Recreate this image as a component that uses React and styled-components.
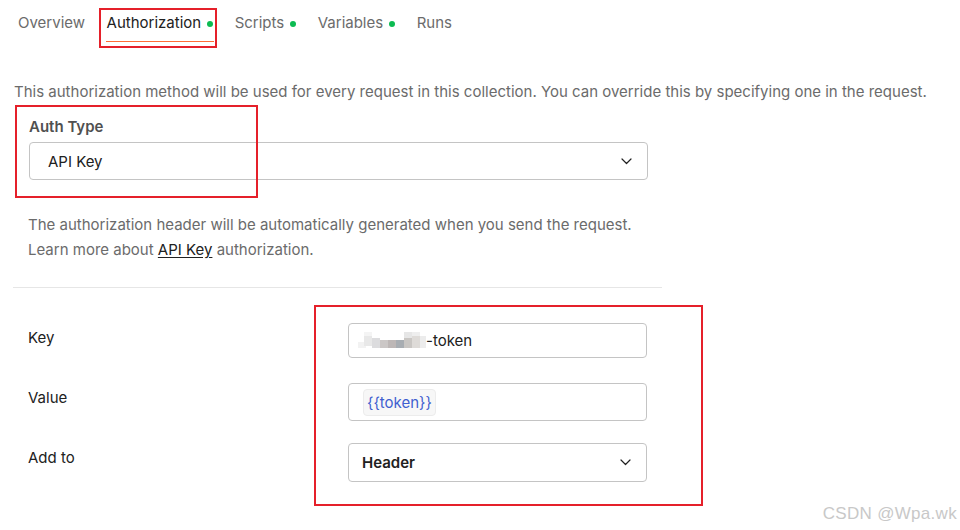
import React from "react";
import styled, { createGlobalStyle } from "styled-components";

const GlobalStyle = createGlobalStyle`
  html, body {
    margin: 0;
    padding: 0;
    background: #ffffff;
  }
  body {
    font-family: Inter, "Noto Sans", sans-serif;
    font-size: 15px;
    color: #212121;
  }
`;

const Page = styled.div`
  position: relative;
  width: 960px;
  height: 530px;
  overflow: hidden;
  background: #fff;
`;

const Tabs = styled.div`
  display: flex;
  align-items: center;
  gap: 21.5px;
  padding: 14px 0 0 18px;
  height: 18px;
`;

const Tab = styled.div`
  position: relative;
  display: flex;
  align-items: center;
  height: 18px;
  color: ${({ active }) => (active ? "#212121" : "#6b6b6b")};
  font-size: 15px;
  line-height: 18px;
  &::after {
    content: "";
    display: ${({ active }) => (active ? "block" : "none")};
    position: absolute;
    left: -1px;
    right: -1px;
    bottom: -10px;
    height: 1px;
    background: #ff6c37;
  }
`;

const Dot = styled.span`
  width: 6px;
  height: 6px;
  border-radius: 50%;
  background: #0cbb52;
  margin-left: 6px;
  margin-top: 1px;
`;

const Intro = styled.p`
  margin: 0;
  padding: 50px 0 0 14px;
  color: #6b6b6b;
  font-size: 15px;
  line-height: 20px;
  white-space: nowrap;
`;

const Field = styled.div`
  display: flex;
  flex-direction: column;
  gap: 5px;
  padding: 15px 0 0 29px;
  width: 619px;
`;

const Label = styled.div`
  color: #505050;
  font-weight: 600;
  font-size: 15px;
  line-height: 20px;
`;

const Select = styled.div`
  display: flex;
  align-items: center;
  justify-content: space-between;
  box-sizing: border-box;
  height: ${({ h }) => h || 38}px;
  padding: 0 15px 0 ${({ pl }) => pl || 18}px;
  border: 1px solid #c4c4c4;
  border-radius: 4px;
  color: #212121;
  font-size: 15px;
  font-weight: ${({ bold }) => (bold ? 600 : 400)};
`;

const Help = styled.div`
  padding: 32px 0 0 28px;
  color: #6b6b6b;
  font-size: 15px;
  line-height: 25px;
  a {
    color: #212121;
    text-decoration: underline;
    text-underline-offset: 2px;
  }
`;

const Divider = styled.hr`
  margin: 25px 0 0 13px;
  width: 649px;
  border: none;
  border-top: 1px solid #e6e6e6;
`;

const Grid = styled.div`
  display: grid;
  grid-template-columns: 320px 299px;
  grid-auto-rows: 60px;
  align-items: start;
  padding: 35px 0 0 28px;
`;

const RowLabel = styled.div`
  padding-top: 5px;
  color: #212121;
  font-size: 15px;
  line-height: 20px;
`;

const Input = styled.div`
  display: flex;
  align-items: center;
  box-sizing: border-box;
  height: ${({ h }) => h}px;
  padding: 0 10px;
  border: 1px solid #c4c4c4;
  border-radius: 4px;
  font-size: 15px;
  color: #212121;
`;

const Chip = styled.span`
  display: inline-flex;
  align-items: center;
  height: 25px;
  padding: 0 3px;
  margin-left: 4px;
  background: #f7f7f7;
  border: 1px solid #ececec;
  border-radius: 4px;
  color: #3f5fd0;
`;

const Mosaic = styled.svg`
  display: block;
  margin-left: -1px;
`;

const Annotation = styled.div`
  position: absolute;
  box-sizing: border-box;
  border: 2px solid #e5202a;
  pointer-events: none;
`;

const Watermark = styled.div`
  position: absolute;
  right: 3px;
  bottom: 6px;
  color: #c8c8c8;
  font-family: "Liberation Sans", Arial, sans-serif;
  font-size: 17px;
  letter-spacing: 0.3px;
`;

function Chevron() {
  return (
    <svg width="11" height="7" viewBox="0 0 11 7" fill="none">
      <path d="M1 1 L5.5 5.5 L10 1" stroke="#212121" strokeWidth="1.2" strokeLinecap="round" strokeLinejoin="round" />
    </svg>
  );
}

// pixelated blur over the hidden part of the key
const mosaic = [
  [0, 10, 6, "#f2f2f2"], [6, 4, 10, "#e8e8e8"], [14, 6, 10, "#dcdcde"], [22, 8, 8, "#cbc7c6"],
  [30, 8, 8, "#bdb7b6"], [38, 8, 8, "#a8adb2"], [46, 6, 10, "#c9c6c3"], [54, 4, 12, "#dedbd8"],
  [62, 4, 12, "#ececec"],
];

function Blur() {
  return (
    <Mosaic width="68" height="18" viewBox="0 0 68 18">
      {mosaic.map(([x, y, h, c], i) => (
        <rect key={i} x={x} y={y} width="8" height={h} fill={c} />
      ))}
      <rect x="6" y="0" width="8" height="4" fill="#f4f4f4" />
      <rect x="46" y="0" width="8" height="6" fill="#e6e6e6" />
      <rect x="54" y="0" width="8" height="4" fill="#eeeeee" />
    </Mosaic>
  );
}

export default function App() {
  const tabs = [
    { name: "Overview" },
    { name: "Authorization", active: true, dot: true },
    { name: "Scripts", dot: true },
    { name: "Variables", dot: true },
    { name: "Runs" },
  ];

  return (
    <Page>
      <GlobalStyle />
      <Tabs>
        {tabs.map((t) => (
          <Tab key={t.name} active={t.active}>
            {t.name}
            {t.dot && <Dot />}
          </Tab>
        ))}
      </Tabs>

      <Intro>
        This authorization method will be used for every request in this collection. You can override this by specifying one in the request.
      </Intro>

      <Field>
        <Label>Auth Type</Label>
        <Select>
          API Key
          <Chevron />
        </Select>
      </Field>

      <Help>
        The authorization header will be automatically generated when you send the request.
        <br />
        Learn more about <a href="#">API Key</a> authorization.
      </Help>

      <Divider />

      <Grid>
        <RowLabel>Key</RowLabel>
        <Input h={35}>
          <Blur />
          -token
        </Input>
        <RowLabel>Value</RowLabel>
        <Input h={38}>
          <Chip>{"{{token}}"}</Chip>
        </Input>
        <RowLabel>Add to</RowLabel>
        <Select h={39} pl={13} bold>
          Header
          <Chevron />
        </Select>
      </Grid>

      <Annotation style={{ left: 99, top: 8, width: 118, height: 40 }} />
      <Annotation style={{ left: 15, top: 105, width: 243, height: 93 }} />
      <Annotation style={{ left: 314, top: 305, width: 389, height: 201 }} />

      <Watermark>CSDN @Wpa.wk</Watermark>
    </Page>
  );
}
